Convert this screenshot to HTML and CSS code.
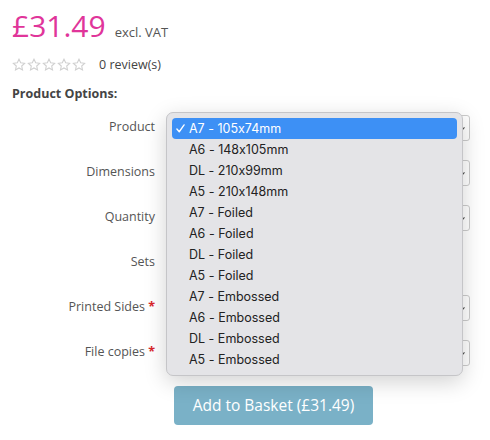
FILE: index.html
```html
<!DOCTYPE html>
<html>
<head>
<meta charset="utf-8">
<link rel="stylesheet" href="styles.css">
</head>
<body>
<div class="page">
  <div class="price-row">
    <span class="price">£31.49</span>
    <span class="vat">excl. VAT</span>
  </div>
  <div class="rating">
    <span class="stars">
      <svg viewBox="0 0 14 14"><path d="M7 1.2l1.7 3.6 3.9.5-2.9 2.7.8 3.9L7 10l-3.5 1.9.8-3.9-2.9-2.7 3.9-.5z"/></svg>
      <svg viewBox="0 0 14 14"><path d="M7 1.2l1.7 3.6 3.9.5-2.9 2.7.8 3.9L7 10l-3.5 1.9.8-3.9-2.9-2.7 3.9-.5z"/></svg>
      <svg viewBox="0 0 14 14"><path d="M7 1.2l1.7 3.6 3.9.5-2.9 2.7.8 3.9L7 10l-3.5 1.9.8-3.9-2.9-2.7 3.9-.5z"/></svg>
      <svg viewBox="0 0 14 14"><path d="M7 1.2l1.7 3.6 3.9.5-2.9 2.7.8 3.9L7 10l-3.5 1.9.8-3.9-2.9-2.7 3.9-.5z"/></svg>
      <svg viewBox="0 0 14 14"><path d="M7 1.2l1.7 3.6 3.9.5-2.9 2.7.8 3.9L7 10l-3.5 1.9.8-3.9-2.9-2.7 3.9-.5z"/></svg>
    </span>
    <span class="reviews">0 review(s)</span>
  </div>
  <div class="options-title">Product Options:</div>

  <div class="form">
    <div class="row">
      <div class="label">Product</div>
      <div class="select"><span class="arrow"></span></div>
    </div>
    <div class="row">
      <div class="label">Dimensions</div>
      <div class="select"><span class="arrow"></span></div>
    </div>
    <div class="row">
      <div class="label">Quantity</div>
      <div class="select"><span class="arrow"></span></div>
    </div>
    <div class="row">
      <div class="label">Sets</div>
      <div class="input-short"></div>
    </div>
    <div class="row">
      <div class="label">Printed Sides <span class="req">*</span></div>
      <div class="select"><span class="arrow"></span></div>
    </div>
    <div class="row">
      <div class="label">File copies <span class="req">*</span></div>
      <div class="select"><span class="arrow"></span></div>
    </div>
    <div class="row button-row">
      <div></div>
      <div><button class="basket">Add to Basket (£31.49)</button></div>
    </div>

    <ul class="dropdown">
      <li class="selected"><svg class="check" viewBox="0 0 10 10"><path d="M1 5.6l2.6 3L9 1"/></svg>A7 - 105x74mm</li>
      <li>A6 - 148x105mm</li>
      <li>DL - 210x99mm</li>
      <li>A5 - 210x148mm</li>
      <li>A7 - Foiled</li>
      <li>A6 - Foiled</li>
      <li>DL - Foiled</li>
      <li>A5 - Foiled</li>
      <li>A7 - Embossed</li>
      <li>A6 - Embossed</li>
      <li>DL - Embossed</li>
      <li>A5 - Embossed</li>
    </ul>
  </div>
</div>
</body>
</html>
```

FILE: styles.css
```css
* { box-sizing: border-box; }
html, body { margin: 0; padding: 0; background: #fff; }
body {
  font-family: "Open Sans", "Noto Sans", sans-serif;
  color: #555;
}
.page {
  padding: 6px 12px 0 12px;
  width: 490px;
  height: 440px;
  overflow: hidden;
}
.price-row {
  display: flex;
  align-items: baseline;
  gap: 9px;
  height: 40px;
}
.price {
  font-size: 30px;
  line-height: 40px;
  color: #e0359a;
}
.vat {
  font-size: 13px;
  color: #555;
}
.rating {
  display: flex;
  align-items: center;
  margin-top: 10px;
  height: 17px;
  gap: 13px;
}
.stars {
  display: flex;
  gap: 1px;
}
.stars svg {
  width: 14px;
  height: 14px;
  fill: none;
  stroke: #d0d0d0;
  stroke-width: 1.1;
  stroke-linejoin: miter;
}
.reviews {
  font-size: 12.5px;
  color: #444;
}
.options-title {
  margin-top: 12px;
  font-size: 12.5px;
  font-weight: 700;
  color: #444;
  line-height: 18px;
}
.form {
  position: relative;
  margin-top: 12px;
}
.row {
  display: grid;
  grid-template-columns: 143px 303px;
  column-gap: 12px;
  align-items: center;
  height: 26px;
  margin-bottom: 19px;
}
.label {
  text-align: right;
  font-size: 12.5px;
  line-height: 16px;
  padding-bottom: 2px;
  color: #555;
}
.req {
  color: #d9262b;
  font-weight: 700;
}
.select {
  height: 26px;
  border: 1px solid #ccc;
  border-radius: 3px;
  background: #fff;
  position: relative;
}
.arrow {
  position: absolute;
  right: 5px;
  top: 10px;
  width: 4px;
  height: 4px;
  border-right: 1.5px solid #444;
  transform: rotate(40deg);
}
.input-short {
  width: 80px;
  height: 26px;
  border: 1px solid #ccc;
  border-radius: 3px;
}
.button-row {
  height: 40px;
  margin-top: 0;
}
.basket {
  margin-left: 7px;
  width: 199px;
  height: 39px;
  border: none;
  border-radius: 4px;
  background: #7ab1c7;
  color: #fff;
  font-family: "Open Sans", "Noto Sans", sans-serif;
  font-size: 15.5px;
  padding: 0;
}
.dropdown {
  position: absolute;
  left: 154px;
  top: -3px;
  width: 297px;
  margin: 0;
  padding: 5px 5px 5px 5px;
  list-style: none;
  background: #e4e4e7;
  border: 1px solid #c5c5c8;
  border-radius: 7px;
  box-shadow: 0 6px 22px rgba(0,0,0,0.18);
  font-family: Inter, "Liberation Sans", sans-serif;
  font-feature-settings: "calt" 0;
  font-size: 12.5px;
  color: #222;
}
.dropdown li {
  height: 21px;
  line-height: 21px;
  padding-left: 17px;
  border-radius: 4px;
  position: relative;
}
.dropdown li.selected {
  background: #3d90f5;
  color: #fff;
}
.check {
  position: absolute;
  left: 4px;
  top: 6px;
  width: 9px;
  height: 9px;
  fill: none;
  stroke: #fff;
  stroke-width: 1.5;
  stroke-linecap: round;
  stroke-linejoin: round;
}
```
